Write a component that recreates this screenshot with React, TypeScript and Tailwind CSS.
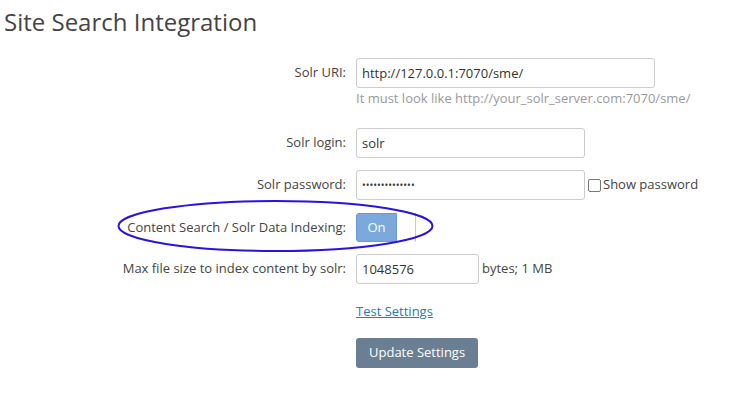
export default function App() {
  const font = { fontFamily: '"Open Sans", "Noto Sans", sans-serif' }
  return (
    <div className="relative w-[740px] h-[394px] bg-white text-[#444]" style={font}>
      <h1 className="pl-[4px] pt-[6px] text-[24px] leading-[32px] text-[#444] font-normal">Site Search Integration</h1>

      <div className="mt-[20px] flex flex-col">
        {/* Solr URI */}
        <div className="flex items-center h-[30px]">
          <label className="w-[346px] text-right text-[13px]">Solr URI:</label>
          <input
            readOnly
            value="http://127.0.0.1:7070/sme/"
            className="ml-[10px] w-[299px] h-[30px] px-[5px] border border-[#ccc] rounded-[3px] text-[13px] text-[#333] outline-none"
          />
        </div>
        <div className="pl-[356px] mt-[1px] text-[13px] text-[#999] leading-[18px]">
          It must look like http://your_solr_server.com:7070/sme/
        </div>

        {/* Solr login */}
        <div className="mt-[21px] flex items-center h-[30px]">
          <label className="w-[346px] text-right text-[13px]">Solr login:</label>
          <input
            readOnly
            value="solr"
            className="ml-[10px] w-[229px] h-[30px] px-[5px] border border-[#ccc] rounded-[3px] text-[13px] text-[#333] outline-none"
          />
        </div>

        {/* Solr password */}
        <div className="mt-[12px] flex items-center h-[30px]">
          <label className="w-[346px] text-right text-[13px]">Solr password:</label>
          <input
            readOnly
            type="password"
            value="aaaaaaaaaaaaaa"
            className="ml-[10px] w-[229px] h-[30px] px-[5px] border border-[#ccc] rounded-[3px] text-[10px] text-[#333] outline-none"
          />
          <span className="ml-[3px] w-[13px] h-[13px] border border-[#777] rounded-[2px] bg-white" />
          <span className="ml-[2px] text-[13px]">Show password</span>
        </div>

        {/* Toggle */}
        <div className="mt-[13px] flex items-center h-[29px]">
          <label className="w-[346px] text-right text-[13px]">Content Search / Solr Data Indexing:</label>
          <div className="ml-[10px] flex h-[29px]">
            <div className="w-[41px] h-full flex items-center justify-center bg-[#7ba9dc] border border-[#6c9ad0] rounded-l-[3px] text-white text-[13px]">
              On
            </div>
            <div className="w-[19px] h-full border-r border-[#ccc]" />
          </div>
        </div>

        {/* Max file size */}
        <div className="mt-[12px] flex items-center h-[30px]">
          <label className="w-[346px] text-right text-[13px]">Max file size to index content by solr:</label>
          <input
            readOnly
            value="1048576"
            className="ml-[10px] w-[123px] h-[30px] px-[5px] border border-[#ccc] rounded-[3px] text-[13px] text-[#333] outline-none"
          />
          <span className="ml-[3px] text-[13px]">bytes; 1 MB</span>
        </div>

        <div className="mt-[18px] pl-[356px] text-[13px] leading-[18px]">
          <a className="text-[#2a7bb8] underline">Test Settings</a>
        </div>

        <div className="mt-[18px] pl-[356px]">
          <button className="h-[30px] px-[13px] bg-[#6a7f93] rounded-[3px] text-white text-[13px]">
            Update Settings
          </button>
        </div>
      </div>

      <svg className="absolute left-0 top-0 pointer-events-none" width="740" height="394">
        <ellipse cx="275.5" cy="226" rx="157" ry="25" fill="none" stroke="#2a12e0" strokeWidth="2" />
      </svg>
    </div>
  )
}
